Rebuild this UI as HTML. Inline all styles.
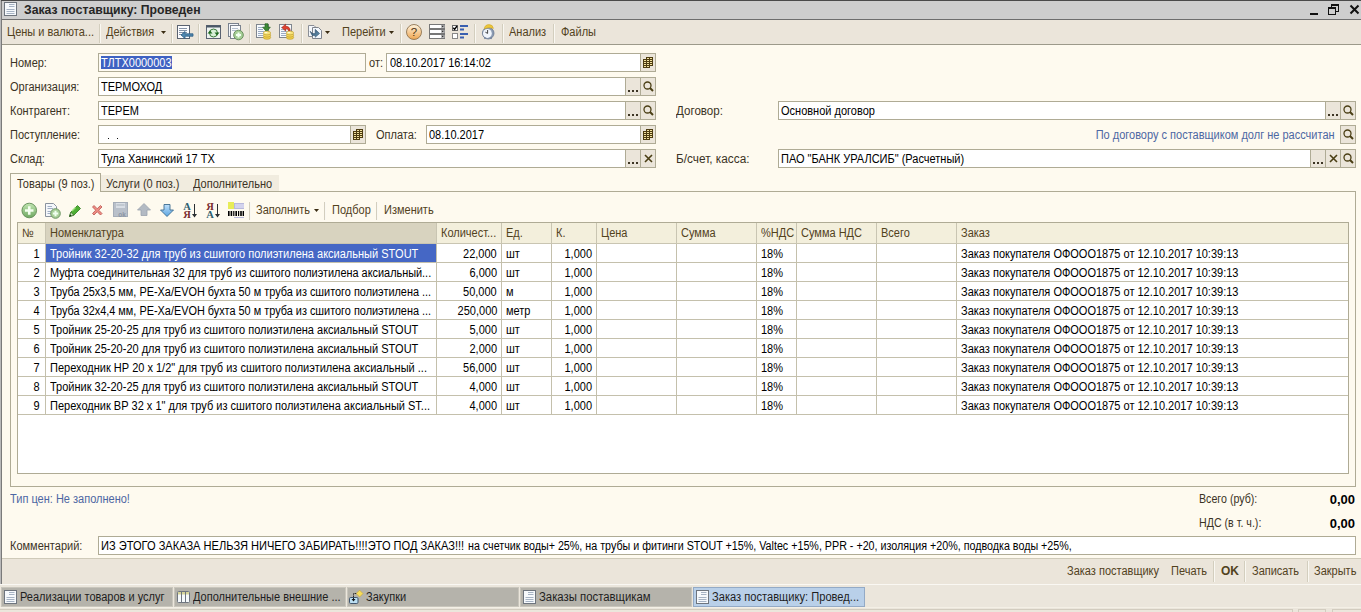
<!DOCTYPE html>
<html><head><meta charset="utf-8"><style>
html,body{margin:0;padding:0;width:1361px;height:612px;overflow:hidden;background:#fefaef;}
.a{position:absolute;}
.t{font-family:"Liberation Sans", sans-serif;line-height:13px;white-space:nowrap;}
svg.a{overflow:visible;}
</style></head><body>
<div class="a" style="left:0px;top:0px;width:1361px;height:612px;background:#fefaef;"></div>
<div class="a" style="left:0px;top:0px;width:1361px;height:1px;background:#4a4a4a;"></div>
<div class="a" style="left:1px;top:1px;width:1360px;height:18px;background:#cecece;"></div>
<div class="a" style="left:1px;top:19px;width:1360px;height:1px;background:#6e6e6e;"></div>
<div class="a" style="left:0px;top:0px;width:1px;height:584px;background:#b9b9b9;"></div>
<div class="a" style="left:1px;top:1px;width:1px;height:583px;background:#7a7a7a;"></div>
<svg class="a" style="left:4px;top:2px" width="13" height="14" viewBox="0 0 13 14"><rect x="0.5" y="0.5" width="12" height="13" fill="#f6f9fc" stroke="#6e757e"/><g stroke="#a6b3c4"><line x1="5" y1="2.5" x2="10.5" y2="2.5"/><line x1="5" y1="4.5" x2="10.5" y2="4.5"/><line x1="2.5" y1="7.5" x2="10.5" y2="7.5"/><line x1="2.5" y1="9.5" x2="10.5" y2="9.5"/><line x1="2.5" y1="11.5" x2="10.5" y2="11.5"/></g></svg>
<div class="a t " style="left:24px;top:4px;font-size:12.6px;transform-origin:0 0;color:#262626;font-weight:bold;transform:scaleX(0.97);">Заказ поставщику: Проведен</div>
<div class="a" style="left:1310px;top:13px;width:8px;height:2px;background:#111;"></div>
<svg class="a" style="left:1327px;top:3px" width="13" height="13" viewBox="0 0 13 13"><g fill="none" stroke="#111"><rect x="4.5" y="1.5" width="7" height="7"/><rect x="1.5" y="4.5" width="7" height="7" fill="#cecece"/></g><rect x="4" y="1" width="8" height="2" fill="#111"/><rect x="1" y="4" width="8" height="2" fill="#111"/></svg>
<svg class="a" style="left:1349px;top:4px" width="11" height="11" viewBox="0 0 11 11"><path d="M1.5 1.5L9.5 9.5M9.5 1.5L1.5 9.5" stroke="#111" stroke-width="2"/></svg>
<div class="a" style="left:2px;top:20px;width:1359px;height:24px;background:#ebe5da;"></div>
<div class="a" style="left:2px;top:44px;width:1359px;height:1px;background:#9c998a;"></div>
<div class="a t " style="left:7px;top:26px;font-size:12px;transform:scaleX(0.917);transform-origin:0 0;color:#52421d;font-weight:normal;">Цены и валюта...</div>
<div class="a" style="left:99px;top:24px;width:1px;height:19px;background:#d3cebe;"></div>
<div class="a" style="left:100px;top:24px;width:1px;height:19px;background:#faf8f2;"></div>
<div class="a t " style="left:106px;top:26px;font-size:12px;transform:scaleX(0.917);transform-origin:0 0;color:#52421d;font-weight:normal;">Действия</div>
<svg class="a" style="left:161px;top:31px" width="5" height="3" viewBox="0 0 5 3"><path d="M0 0H5L2.5 3Z" fill="#3a2c12"/></svg>
<div class="a" style="left:171px;top:24px;width:1px;height:19px;background:#d3cebe;"></div>
<div class="a" style="left:172px;top:24px;width:1px;height:19px;background:#faf8f2;"></div>
<div class="a" style="left:198px;top:24px;width:1px;height:19px;background:#d3cebe;"></div>
<div class="a" style="left:199px;top:24px;width:1px;height:19px;background:#faf8f2;"></div>
<div class="a" style="left:249px;top:24px;width:1px;height:19px;background:#d3cebe;"></div>
<div class="a" style="left:250px;top:24px;width:1px;height:19px;background:#faf8f2;"></div>
<div class="a" style="left:301px;top:24px;width:1px;height:19px;background:#d3cebe;"></div>
<div class="a" style="left:302px;top:24px;width:1px;height:19px;background:#faf8f2;"></div>
<div class="a t " style="left:342px;top:26px;font-size:12px;transform:scaleX(0.917);transform-origin:0 0;color:#52421d;font-weight:normal;">Перейти</div>
<svg class="a" style="left:389px;top:31px" width="5" height="3" viewBox="0 0 5 3"><path d="M0 0H5L2.5 3Z" fill="#3a2c12"/></svg>
<div class="a" style="left:400px;top:24px;width:1px;height:19px;background:#d3cebe;"></div>
<div class="a" style="left:401px;top:24px;width:1px;height:19px;background:#faf8f2;"></div>
<div class="a" style="left:474px;top:24px;width:1px;height:19px;background:#d3cebe;"></div>
<div class="a" style="left:475px;top:24px;width:1px;height:19px;background:#faf8f2;"></div>
<div class="a" style="left:502px;top:24px;width:1px;height:19px;background:#d3cebe;"></div>
<div class="a" style="left:503px;top:24px;width:1px;height:19px;background:#faf8f2;"></div>
<div class="a t " style="left:509px;top:26px;font-size:12px;transform:scaleX(0.917);transform-origin:0 0;color:#52421d;font-weight:normal;">Анализ</div>
<div class="a" style="left:553px;top:24px;width:1px;height:19px;background:#d3cebe;"></div>
<div class="a" style="left:554px;top:24px;width:1px;height:19px;background:#faf8f2;"></div>
<div class="a t " style="left:561px;top:26px;font-size:12px;transform:scaleX(0.917);transform-origin:0 0;color:#52421d;font-weight:normal;">Файлы</div>
<svg class="a" style="left:176px;top:24px" width="18" height="16" viewBox="0 0 18 16"><rect x="1.5" y="1.5" width="12" height="13" fill="#fbfcfe" stroke="#5a6270"/><g stroke="#8593a8"><line x1="3" y1="4.5" x2="11" y2="4.5"/><line x1="3" y1="6.5" x2="11" y2="6.5"/><line x1="3" y1="8.5" x2="11" y2="8.5"/><line x1="3" y1="10.5" x2="6" y2="10.5"/></g><path d="M5 11L9 7.5V9.8H17V12.2H9V14.5Z" fill="#4f86ae" stroke="#2f5f86" stroke-width="0.8"/></svg>
<svg class="a" style="left:206px;top:25px" width="15" height="14" viewBox="0 0 15 14"><rect x="0.5" y="0.5" width="14" height="13" fill="#eef3f0" stroke="#5a6270"/><rect x="0.5" y="0.5" width="14" height="2" fill="#4a5866"/><circle cx="7.5" cy="8" r="4" fill="#d8f0d8" stroke="#3a7a3a"/><path d="M1.5 8.5L4 5.5L6.5 8.5Z" fill="#1f6a1f"/><path d="M8.5 7.5L11 10.5L13.5 7.5Z" fill="#1f6a1f"/></svg>
<svg class="a" style="left:228px;top:23px" width="17" height="17" viewBox="0 0 17 17"><rect x="0.5" y="0.5" width="10" height="13" fill="#f4f6fa" stroke="#7a828e"/><rect x="2.5" y="2.5" width="10" height="13" fill="#fafbfd" stroke="#7a828e"/><g stroke="#b4c0d0"><line x1="4" y1="5.5" x2="10" y2="5.5"/><line x1="4" y1="7.5" x2="8" y2="7.5"/></g><circle cx="10.5" cy="12" r="4.8" fill="#a6cf96" stroke="#6a8f60"/><path d="M8 12H13M10.5 9.5V14.5" stroke="#f0fff0" stroke-width="2"/></svg>
<svg class="a" style="left:256px;top:23px" width="16" height="17" viewBox="0 0 16 17"><rect x="0.5" y="1.5" width="12" height="13" fill="#f7fafd" stroke="#80868e"/><g stroke="#9aaac2"><line x1="2" y1="4.5" x2="7" y2="4.5"/><line x1="2" y1="6.5" x2="7" y2="6.5"/><line x1="2" y1="8.5" x2="8" y2="8.5"/><line x1="2" y1="10.5" x2="7" y2="10.5"/><line x1="2" y1="12.5" x2="7" y2="12.5"/></g><path d="M9 0.8H12V4.2H14.3L10.5 8.8L6.7 4.2H9Z" fill="#3d8a36" stroke="#22601e" stroke-width="0.7"/><linearGradient id="gc" x1="0" y1="0" x2="0" y2="1"><stop offset="0" stop-color="#fff3a0"/><stop offset="1" stop-color="#d8b030"/></linearGradient><g stroke="#b8962a" stroke-width="0.6"><ellipse cx="11" cy="14.4" rx="3.7" ry="1.9" fill="#f0d04a"/><ellipse cx="11" cy="12.2" rx="3.7" ry="1.9" fill="#f3d658"/><ellipse cx="11" cy="10" rx="3.7" ry="1.9" fill="#f8e47a"/></g><ellipse cx="10" cy="9.6" rx="1.6" ry="0.7" fill="#fffbe0"/></svg>
<svg class="a" style="left:279px;top:23px" width="16" height="17" viewBox="0 0 16 17"><rect x="0.5" y="1.5" width="12" height="13" fill="#f7fafd" stroke="#80868e"/><g stroke="#9aaac2"><line x1="2" y1="4.5" x2="7" y2="4.5"/><line x1="2" y1="6.5" x2="7" y2="6.5"/><line x1="2" y1="8.5" x2="8" y2="8.5"/><line x1="2" y1="10.5" x2="7" y2="10.5"/><line x1="2" y1="12.5" x2="7" y2="12.5"/></g><path d="M2.8 4.6L6.6 1.2V3.3Q11.2 3.3 11.2 8H9.6Q9.4 5.6 6.6 5.8V8Z" fill="#e04030" stroke="#9a2010" stroke-width="0.6"/><linearGradient id="gc" x1="0" y1="0" x2="0" y2="1"><stop offset="0" stop-color="#fff3a0"/><stop offset="1" stop-color="#d8b030"/></linearGradient><g stroke="#b8962a" stroke-width="0.6"><ellipse cx="11" cy="14.4" rx="3.7" ry="1.9" fill="#f0d04a"/><ellipse cx="11" cy="12.2" rx="3.7" ry="1.9" fill="#f3d658"/><ellipse cx="11" cy="10" rx="3.7" ry="1.9" fill="#f8e47a"/></g><ellipse cx="10" cy="9.6" rx="1.6" ry="0.7" fill="#fffbe0"/></svg>
<svg class="a" style="left:308px;top:24px" width="16" height="16" viewBox="0 0 16 16"><path d="M0.5 1.5H6L7.5 3V12.5H0.5Z" fill="#f4f7fb" stroke="#8a8e96"/><path d="M4.5 3.5H10.5L13.5 6.5V14.5H4.5Z" fill="#f2f7fc" stroke="#7e838c"/><linearGradient id="gb" x1="0" y1="0" x2="1" y2="1"><stop offset="0" stop-color="#2c4c6a"/><stop offset="1" stop-color="#6a9ab8"/></linearGradient><path d="M2 7.2L4.6 9.6H7.2V5.3L11.6 9.5L7.2 13.3V11.5H4.2Z" fill="url(#gb)" stroke="#264460" stroke-width="0.5"/></svg>
<svg class="a" style="left:406px;top:24px" width="17" height="17" viewBox="0 0 17 17"><linearGradient id="gh" x1="0" y1="0" x2="0" y2="1"><stop offset="0" stop-color="#fff4de"/><stop offset="1" stop-color="#eea550"/></linearGradient><circle cx="8" cy="8" r="7.5" fill="url(#gh)" stroke="#8f7450" stroke-width="0.9"/><text x="8" y="12.3" text-anchor="middle" font-family="Liberation Sans" font-size="11.5" fill="#4a3414">?</text></svg>
<svg class="a" style="left:429px;top:24px" width="17" height="16" viewBox="0 0 17 16"><rect x="0.5" y="0.5" width="15" height="4" fill="#fff" stroke="#777"/><rect x="12" y="1" width="3.5" height="3" fill="#bbb"/><path d="M12.7 1.8H14.8L13.75 3.3Z" fill="#111"/><rect x="0.5" y="5.5" width="15" height="4" fill="#fff" stroke="#777"/><rect x="12" y="6" width="3.5" height="3" fill="#bbb"/><path d="M12.7 6.8H14.8L13.75 8.3Z" fill="#111"/><rect x="0.5" y="10.5" width="15" height="4" fill="#fff" stroke="#777"/><rect x="12" y="11" width="3.5" height="3" fill="#bbb"/><path d="M12.7 11.8H14.8L13.75 13.3Z" fill="#111"/></svg>
<svg class="a" style="left:452px;top:25px" width="17" height="15" viewBox="0 0 17 15"><rect x="0.5" y="0.5" width="5" height="5" fill="#fff" stroke="#666"/><path d="M1.3 2.8L2.6 4.3L5 1" stroke="#000" stroke-width="1.4" fill="none"/><rect x="0.5" y="8.5" width="5" height="5" fill="#fff" stroke="#888"/><g fill="#3a5fb0"><rect x="8" y="0" width="8" height="2"/><rect x="8" y="3.5" width="4" height="2"/><rect x="8" y="8" width="8" height="2"/><rect x="8" y="11.5" width="4" height="2"/></g></svg>
<svg class="a" style="left:481px;top:24px" width="15" height="16" viewBox="0 0 15 16"><circle cx="7.2" cy="9.2" r="5.8" fill="#8a9ab2" stroke="#6a7a92" stroke-width="0.8"/><ellipse cx="6.4" cy="9.4" rx="4.4" ry="4.5" fill="#f0f5fb"/><path d="M6.6 6V9.4L4.4 8.2" stroke="#333" fill="none" stroke-width="0.9"/><path d="M3.5 14.8L4.5 13.6M10.5 14.8L9.5 13.6" stroke="#6a7a98" stroke-width="1.2"/><path d="M3.2 4.8Q4 0.6 8 0.6Q12 0.6 12.4 4.4Q8 2.8 3.2 4.8Z" fill="#ecc63a" stroke="#c9a020" stroke-width="0.5"/></svg>
<svg class="a" style="left:325px;top:31px" width="5" height="3" viewBox="0 0 5 3"><path d="M0 0H5L2.5 3Z" fill="#3a2c12"/></svg>
<svg class="a" style="left:21px;top:202px" width="17" height="17" viewBox="0 0 17 17"><linearGradient id="ga" x1="0" y1="0" x2="0" y2="1"><stop offset="0" stop-color="#c2e6b2"/><stop offset="1" stop-color="#6fa862"/></linearGradient><circle cx="8.25" cy="8.5" r="7.3" fill="url(#ga)" stroke="#5f8a55" stroke-width="0.9"/><path d="M4 8.5H12.5M8.25 4.25V12.75" stroke="#f4fff0" stroke-width="2.6"/></svg>
<svg class="a" style="left:45px;top:203px" width="17" height="16" viewBox="0 0 17 16"><path d="M0.5 0.5H8.5L11.5 3.5V13.5H0.5Z" fill="#f5f7fb" stroke="#8a929e"/><g stroke="#a0aec4"><line x1="2.5" y1="3.5" x2="7" y2="3.5"/><line x1="2.5" y1="5.5" x2="8" y2="5.5"/><line x1="2.5" y1="8.5" x2="6" y2="8.5"/><line x1="2.5" y1="10.5" x2="6" y2="10.5"/></g><circle cx="10.5" cy="10.5" r="4.8" fill="#a8cf98" stroke="#6f9566"/><path d="M7.8 10.5H13.2M10.5 7.8V13.2" stroke="#f0fff0" stroke-width="2"/></svg>
<svg class="a" style="left:69px;top:204px" width="13" height="13" viewBox="0 0 13 13"><path d="M0.5 12.5L1.8 8.2L8.5 1.5L11.5 4.5L4.8 11.2Z" fill="#4faf34" stroke="#2d7a1e" stroke-width="0.8"/><path d="M3 7L6.5 3.5" stroke="#9be07a" stroke-width="1.2"/><path d="M0.5 12.5L1.8 8.2L4.8 11.2Z" fill="#cfe8c0" stroke="#2d5a1e" stroke-width="0.6"/><path d="M0.5 12.5L1.2 10.3L2.7 11.8Z" fill="#1a3a10"/></svg>
<svg class="a" style="left:91px;top:204px" width="13" height="13" viewBox="0 0 13 13"><path d="M1.5 3L3 1.5L6.2 4.7L9.5 1.5L11 3L7.7 6.2L11 9.5L9.5 11L6.2 7.7L3 11L1.5 9.5L4.7 6.2Z" fill="#ee8d84" stroke="#b9534e" stroke-width="0.8"/></svg>
<svg class="a" style="left:113px;top:202px" width="16" height="16" viewBox="0 0 16 16"><rect x="0.5" y="0.5" width="14" height="14" fill="#b9c0ca" stroke="#a5adb8"/><rect x="3" y="1" width="9" height="5" fill="#d9dee5"/><rect x="3.5" y="2.5" width="8" height="1" fill="#a9b1bc"/><text x="9" y="14.5" text-anchor="middle" font-family="Liberation Sans" font-weight="bold" font-size="6.5" fill="#8d96a3">ok</text></svg>
<svg class="a" style="left:137px;top:203px" width="14" height="13" viewBox="0 0 14 13"><path d="M0.5 7L7 0.5L13.5 7H10V12.5H4V7Z" fill="#b3bac3" stroke="#9aa2ad" stroke-width="0.8"/></svg>
<svg class="a" style="left:160px;top:204px" width="14" height="13" viewBox="0 0 14 13"><linearGradient id="gd" x1="0" y1="0" x2="0" y2="1"><stop offset="0" stop-color="#bfe0fb"/><stop offset="1" stop-color="#5aa4e0"/></linearGradient><path d="M4 0.5H10V6H13.5L7 12.5L0.5 6H4Z" fill="url(#gd)" stroke="#3c6c90" stroke-width="0.9"/></svg>
<svg class="a" style="left:183px;top:202px" width="16" height="17" viewBox="0 0 16 17"><text x="4" y="8" text-anchor="middle" font-family="Liberation Serif" font-weight="bold" font-size="10.5" fill="#2d5f70">A</text><text x="4" y="16.2" text-anchor="middle" font-family="Liberation Serif" font-weight="bold" font-size="10.5" fill="#7a2d2d">Я</text><path d="M11.5 2V15" stroke="#2a2f33" stroke-width="1"/><path d="M9 12L11.5 15.5L14 12Z" fill="#2a2f33"/></svg>
<svg class="a" style="left:206px;top:202px" width="16" height="17" viewBox="0 0 16 17"><text x="4" y="8" text-anchor="middle" font-family="Liberation Serif" font-weight="bold" font-size="10.5" fill="#7a2d2d">Я</text><text x="4" y="16.2" text-anchor="middle" font-family="Liberation Serif" font-weight="bold" font-size="10.5" fill="#2d5f70">A</text><path d="M11.5 2V15" stroke="#2a2f33" stroke-width="1"/><path d="M9 12L11.5 15.5L14 12Z" fill="#2a2f33"/></svg>
<svg class="a" style="left:228px;top:202px" width="17" height="17" viewBox="0 0 17 17"><rect x="0" y="0" width="6" height="7" fill="#e8ec58"/><rect x="6" y="1" width="10" height="6" fill="#b9b9dc"/><rect x="7" y="2.5" width="9" height="1" fill="#eef"/><rect x="7" y="4.5" width="9" height="1" fill="#eef"/><g fill="#000"><rect x="0" y="9" width="1.6" height="5"/><rect x="2.6" y="9" width="1.6" height="5"/><rect x="5.2" y="9" width="1.2" height="5"/><rect x="7.4" y="9" width="1.6" height="5"/><rect x="10" y="9" width="1.2" height="5"/><rect x="12.2" y="9" width="1.6" height="5"/><rect x="14.6" y="9" width="1.4" height="5"/></g><rect x="6" y="15" width="10" height="1" fill="#b9b9dc"/></svg>
<div class="a t " style="left:10px;top:57px;font-size:12px;transform:scaleX(0.917);transform-origin:0 0;color:#3b3325;font-weight:normal;">Номер:</div>
<div class="a" style="left:98px;top:53px;width:268px;height:19px;background:#fdfaf2;box-sizing:border-box;border:1px solid #afab95;"></div>
<div class="a" style="left:101px;top:56px;width:71px;height:13px;background:#3f62c2;"></div>
<div class="a t " style="left:101px;top:57px;font-size:12px;transform:scaleX(0.917);transform-origin:0 0;color:#fff;font-weight:normal;">ТЛТХ0000003</div>
<div class="a t " style="left:369px;top:57px;font-size:12px;transform:scaleX(0.917);transform-origin:0 0;color:#3b3325;font-weight:normal;">от:</div>
<div class="a" style="left:386px;top:53px;width:270px;height:19px;background:#fff;box-sizing:border-box;border:1px solid #afab95;"></div>
<div class="a" style="left:640px;top:53px;width:16px;height:19px;background:#ebe5da;box-sizing:border-box;border:1px solid #afab95;"></div>
<svg class="a" style="left:643px;top:57px" width="11" height="12" viewBox="0 0 11 12"><g fill="#4d3c12"><rect x="3" y="0" width="7" height="3"/><rect x="0" y="2" width="10" height="7"/><rect x="0" y="8" width="7" height="3"/></g><g fill="#f3e3a0"><rect x="4" y="1" width="2" height="1"/><rect x="7" y="1" width="2" height="1"/><rect x="1" y="3" width="2" height="1"/><rect x="4" y="3" width="2" height="1"/><rect x="7" y="3" width="2" height="1"/><rect x="1" y="5" width="2" height="1"/><rect x="4" y="5" width="2" height="1"/><rect x="7" y="5" width="2" height="1"/><rect x="1" y="7" width="2" height="1"/><rect x="4" y="7" width="2" height="1"/><rect x="7" y="7" width="2" height="1"/><rect x="1" y="9" width="2" height="1"/><rect x="4" y="9" width="2" height="1"/></g></svg>
<div class="a t " style="left:390px;top:57px;font-size:12px;transform:scaleX(0.917);transform-origin:0 0;color:#000;font-weight:normal;">08.10.2017 16:14:02</div>
<div class="a t " style="left:10px;top:81px;font-size:12px;transform:scaleX(0.917);transform-origin:0 0;color:#3b3325;font-weight:normal;">Организация:</div>
<div class="a" style="left:98px;top:77px;width:558px;height:19px;background:#fff;box-sizing:border-box;border:1px solid #afab95;"></div>
<div class="a" style="left:625px;top:77px;width:16px;height:19px;background:#ebe5da;box-sizing:border-box;border:1px solid #afab95;"></div>
<svg class="a" style="left:628px;top:90px" width="10" height="2" viewBox="0 0 10 2"><rect x="0" y="0" width="2" height="2" fill="#3d3525"/><rect x="4" y="0" width="2" height="2" fill="#3d3525"/><rect x="8" y="0" width="2" height="2" fill="#3d3525"/></svg>
<div class="a" style="left:640px;top:77px;width:16px;height:19px;background:#ebe5da;box-sizing:border-box;border:1px solid #afab95;"></div>
<svg class="a" style="left:643px;top:81px" width="11" height="11" viewBox="0 0 11 11"><circle cx="4.5" cy="4.5" r="3.5" fill="none" stroke="#4a3e14" stroke-width="1.3"/><path d="M7 7L10 10" stroke="#4a3e14" stroke-width="2"/></svg>
<div class="a t " style="left:101px;top:81px;font-size:12px;transform:scaleX(0.917);transform-origin:0 0;color:#000;font-weight:normal;">ТЕРМОХОД</div>
<div class="a t " style="left:10px;top:105px;font-size:12px;transform:scaleX(0.917);transform-origin:0 0;color:#3b3325;font-weight:normal;">Контрагент:</div>
<div class="a" style="left:98px;top:101px;width:558px;height:19px;background:#fff;box-sizing:border-box;border:1px solid #afab95;"></div>
<div class="a" style="left:625px;top:101px;width:16px;height:19px;background:#ebe5da;box-sizing:border-box;border:1px solid #afab95;"></div>
<svg class="a" style="left:628px;top:114px" width="10" height="2" viewBox="0 0 10 2"><rect x="0" y="0" width="2" height="2" fill="#3d3525"/><rect x="4" y="0" width="2" height="2" fill="#3d3525"/><rect x="8" y="0" width="2" height="2" fill="#3d3525"/></svg>
<div class="a" style="left:640px;top:101px;width:16px;height:19px;background:#ebe5da;box-sizing:border-box;border:1px solid #afab95;"></div>
<svg class="a" style="left:643px;top:105px" width="11" height="11" viewBox="0 0 11 11"><circle cx="4.5" cy="4.5" r="3.5" fill="none" stroke="#4a3e14" stroke-width="1.3"/><path d="M7 7L10 10" stroke="#4a3e14" stroke-width="2"/></svg>
<div class="a t " style="left:101px;top:105px;font-size:12px;transform:scaleX(0.917);transform-origin:0 0;color:#000;font-weight:normal;">ТЕРЕМ</div>
<div class="a t " style="left:10px;top:129px;font-size:12px;transform:scaleX(0.917);transform-origin:0 0;color:#3b3325;font-weight:normal;">Поступление:</div>
<div class="a" style="left:98px;top:125px;width:268px;height:19px;background:#fff;box-sizing:border-box;border:1px solid #afab95;"></div>
<div class="a" style="left:350px;top:125px;width:16px;height:19px;background:#ebe5da;box-sizing:border-box;border:1px solid #afab95;"></div>
<svg class="a" style="left:353px;top:129px" width="11" height="12" viewBox="0 0 11 12"><g fill="#4d3c12"><rect x="3" y="0" width="7" height="3"/><rect x="0" y="2" width="10" height="7"/><rect x="0" y="8" width="7" height="3"/></g><g fill="#f3e3a0"><rect x="4" y="1" width="2" height="1"/><rect x="7" y="1" width="2" height="1"/><rect x="1" y="3" width="2" height="1"/><rect x="4" y="3" width="2" height="1"/><rect x="7" y="3" width="2" height="1"/><rect x="1" y="5" width="2" height="1"/><rect x="4" y="5" width="2" height="1"/><rect x="7" y="5" width="2" height="1"/><rect x="1" y="7" width="2" height="1"/><rect x="4" y="7" width="2" height="1"/><rect x="7" y="7" width="2" height="1"/><rect x="1" y="9" width="2" height="1"/><rect x="4" y="9" width="2" height="1"/></g></svg>
<div class="a" style="left:108px;top:138px;width:1px;height:1px;background:#111;"></div>
<div class="a" style="left:117px;top:138px;width:1px;height:1px;background:#111;"></div>
<div class="a t " style="left:376px;top:129px;font-size:12px;transform:scaleX(0.917);transform-origin:0 0;color:#3b3325;font-weight:normal;">Оплата:</div>
<div class="a" style="left:426px;top:125px;width:230px;height:19px;background:#fff;box-sizing:border-box;border:1px solid #afab95;"></div>
<div class="a" style="left:640px;top:125px;width:16px;height:19px;background:#ebe5da;box-sizing:border-box;border:1px solid #afab95;"></div>
<svg class="a" style="left:643px;top:129px" width="11" height="12" viewBox="0 0 11 12"><g fill="#4d3c12"><rect x="3" y="0" width="7" height="3"/><rect x="0" y="2" width="10" height="7"/><rect x="0" y="8" width="7" height="3"/></g><g fill="#f3e3a0"><rect x="4" y="1" width="2" height="1"/><rect x="7" y="1" width="2" height="1"/><rect x="1" y="3" width="2" height="1"/><rect x="4" y="3" width="2" height="1"/><rect x="7" y="3" width="2" height="1"/><rect x="1" y="5" width="2" height="1"/><rect x="4" y="5" width="2" height="1"/><rect x="7" y="5" width="2" height="1"/><rect x="1" y="7" width="2" height="1"/><rect x="4" y="7" width="2" height="1"/><rect x="7" y="7" width="2" height="1"/><rect x="1" y="9" width="2" height="1"/><rect x="4" y="9" width="2" height="1"/></g></svg>
<div class="a t " style="left:429px;top:129px;font-size:12px;transform:scaleX(0.917);transform-origin:0 0;color:#000;font-weight:normal;">08.10.2017</div>
<div class="a t " style="left:10px;top:153px;font-size:12px;transform:scaleX(0.917);transform-origin:0 0;color:#3b3325;font-weight:normal;">Склад:</div>
<div class="a" style="left:98px;top:149px;width:558px;height:19px;background:#fff;box-sizing:border-box;border:1px solid #afab95;"></div>
<div class="a" style="left:625px;top:149px;width:16px;height:19px;background:#ebe5da;box-sizing:border-box;border:1px solid #afab95;"></div>
<svg class="a" style="left:628px;top:162px" width="10" height="2" viewBox="0 0 10 2"><rect x="0" y="0" width="2" height="2" fill="#3d3525"/><rect x="4" y="0" width="2" height="2" fill="#3d3525"/><rect x="8" y="0" width="2" height="2" fill="#3d3525"/></svg>
<div class="a" style="left:640px;top:149px;width:16px;height:19px;background:#ebe5da;box-sizing:border-box;border:1px solid #afab95;"></div>
<svg class="a" style="left:644px;top:154px" width="9" height="9" viewBox="0 0 9 9"><path d="M1 1L8 8M8 1L1 8" stroke="#4a3e14" stroke-width="1.6"/></svg>
<div class="a t " style="left:101px;top:153px;font-size:12px;transform:scaleX(0.917);transform-origin:0 0;color:#000;font-weight:normal;">Тула Ханинский 17 ТХ</div>
<div class="a t " style="left:676px;top:105px;font-size:12px;transform:scaleX(0.917);transform-origin:0 0;color:#3b3325;font-weight:normal;transform:scaleX(0.965);">Договор:</div>
<div class="a" style="left:778px;top:101px;width:578px;height:19px;background:#fff;box-sizing:border-box;border:1px solid #afab95;"></div>
<div class="a" style="left:1325px;top:101px;width:16px;height:19px;background:#ebe5da;box-sizing:border-box;border:1px solid #afab95;"></div>
<svg class="a" style="left:1328px;top:114px" width="10" height="2" viewBox="0 0 10 2"><rect x="0" y="0" width="2" height="2" fill="#3d3525"/><rect x="4" y="0" width="2" height="2" fill="#3d3525"/><rect x="8" y="0" width="2" height="2" fill="#3d3525"/></svg>
<div class="a" style="left:1340px;top:101px;width:16px;height:19px;background:#ebe5da;box-sizing:border-box;border:1px solid #afab95;"></div>
<svg class="a" style="left:1343px;top:105px" width="11" height="11" viewBox="0 0 11 11"><circle cx="4.5" cy="4.5" r="3.5" fill="none" stroke="#4a3e14" stroke-width="1.3"/><path d="M7 7L10 10" stroke="#4a3e14" stroke-width="2"/></svg>
<div class="a t " style="left:781px;top:105px;font-size:12px;transform:scaleX(0.917);transform-origin:0 0;color:#000;font-weight:normal;">Основной договор</div>
<div class="a t" style="right:26px;top:129px;font-size:12px;transform:scaleX(0.917);transform-origin:100% 0;color:#4d67a3;font-weight:normal;text-align:right;">По договору с поставщиком долг не рассчитан</div>
<div class="a" style="left:1340px;top:125px;width:16px;height:19px;background:#ebe5da;box-sizing:border-box;border:1px solid #afab95;"></div>
<svg class="a" style="left:1343px;top:129px" width="11" height="11" viewBox="0 0 11 11"><circle cx="4.5" cy="4.5" r="3.5" fill="none" stroke="#4a3e14" stroke-width="1.3"/><path d="M7 7L10 10" stroke="#4a3e14" stroke-width="2"/></svg>
<div class="a t " style="left:676px;top:153px;font-size:12px;transform:scaleX(0.917);transform-origin:0 0;color:#3b3325;font-weight:normal;transform:scaleX(0.985);">Б/счет, касса:</div>
<div class="a" style="left:778px;top:149px;width:578px;height:19px;background:#fff;box-sizing:border-box;border:1px solid #afab95;"></div>
<div class="a" style="left:1310px;top:149px;width:16px;height:19px;background:#ebe5da;box-sizing:border-box;border:1px solid #afab95;"></div>
<svg class="a" style="left:1313px;top:162px" width="10" height="2" viewBox="0 0 10 2"><rect x="0" y="0" width="2" height="2" fill="#3d3525"/><rect x="4" y="0" width="2" height="2" fill="#3d3525"/><rect x="8" y="0" width="2" height="2" fill="#3d3525"/></svg>
<div class="a" style="left:1325px;top:149px;width:16px;height:19px;background:#ebe5da;box-sizing:border-box;border:1px solid #afab95;"></div>
<svg class="a" style="left:1329px;top:154px" width="9" height="9" viewBox="0 0 9 9"><path d="M1 1L8 8M8 1L1 8" stroke="#4a3e14" stroke-width="1.6"/></svg>
<div class="a" style="left:1340px;top:149px;width:16px;height:19px;background:#ebe5da;box-sizing:border-box;border:1px solid #afab95;"></div>
<svg class="a" style="left:1343px;top:153px" width="11" height="11" viewBox="0 0 11 11"><circle cx="4.5" cy="4.5" r="3.5" fill="none" stroke="#4a3e14" stroke-width="1.3"/><path d="M7 7L10 10" stroke="#4a3e14" stroke-width="2"/></svg>
<div class="a t " style="left:781px;top:153px;font-size:12px;transform:scaleX(0.917);transform-origin:0 0;color:#000;font-weight:normal;">ПАО &quot;БАНК УРАЛСИБ&quot; (Расчетный)</div>
<div class="a" style="left:10px;top:191px;width:1346px;height:296px;box-sizing:border-box;border:1px solid #afab95;"></div>
<div class="a" style="left:101px;top:175px;width:178px;height:16px;background:#f1ecdf;"></div>
<div class="a" style="left:10px;top:173px;width:91px;height:19px;background:#fefaef;box-sizing:border-box;border:1px solid #afab95;border-bottom:none;"></div>
<div class="a t " style="left:17px;top:178px;font-size:12px;transform:scaleX(0.917);transform-origin:0 0;color:#3b3325;font-weight:normal;">Товары (9 поз.)</div>
<div class="a t " style="left:106px;top:178px;font-size:12px;transform:scaleX(0.917);transform-origin:0 0;color:#3b3325;font-weight:normal;">Услуги (0 поз.)</div>
<div class="a t " style="left:193px;top:178px;font-size:12px;transform:scaleX(0.917);transform-origin:0 0;color:#3b3325;font-weight:normal;">Дополнительно</div>
<div class="a" style="left:249px;top:202px;width:1px;height:18px;background:#d3cebe;"></div>
<div class="a" style="left:250px;top:202px;width:1px;height:18px;background:#faf8f2;"></div>
<div class="a t " style="left:256px;top:204px;font-size:12px;transform:scaleX(0.917);transform-origin:0 0;color:#52421d;font-weight:normal;">Заполнить</div>
<svg class="a" style="left:314px;top:209px" width="5" height="3" viewBox="0 0 5 3"><path d="M0 0H5L2.5 3Z" fill="#3a2c12"/></svg>
<div class="a" style="left:324px;top:202px;width:1px;height:18px;background:#d3cebe;"></div>
<div class="a" style="left:325px;top:202px;width:1px;height:18px;background:#faf8f2;"></div>
<div class="a t " style="left:332px;top:204px;font-size:12px;transform:scaleX(0.917);transform-origin:0 0;color:#52421d;font-weight:normal;">Подбор</div>
<div class="a" style="left:376px;top:202px;width:1px;height:18px;background:#d3cebe;"></div>
<div class="a" style="left:377px;top:202px;width:1px;height:18px;background:#faf8f2;"></div>
<div class="a t " style="left:384px;top:204px;font-size:12px;transform:scaleX(0.917);transform-origin:0 0;color:#52421d;font-weight:normal;">Изменить</div>
<div class="a" style="left:17px;top:222px;width:1332px;height:252px;background:#fff;box-sizing:border-box;border:1px solid #afab95;"></div>
<div class="a" style="left:18px;top:223px;width:1330px;height:20px;background:#f3efdc;"></div>
<div class="a" style="left:46px;top:223px;width:390px;height:20px;background:#d8d3bf;"></div>
<div class="a" style="left:18px;top:243px;width:1330px;height:1px;background:#c9c5b2;"></div>
<div class="a" style="left:45px;top:223px;width:1px;height:20px;background:#c9c5b2;"></div>
<div class="a" style="left:45px;top:244px;width:1px;height:171px;background:#c4c0ac;"></div>
<div class="a" style="left:436px;top:223px;width:1px;height:20px;background:#c9c5b2;"></div>
<div class="a" style="left:436px;top:244px;width:1px;height:171px;background:#c4c0ac;"></div>
<div class="a" style="left:501px;top:223px;width:1px;height:20px;background:#c9c5b2;"></div>
<div class="a" style="left:501px;top:244px;width:1px;height:171px;background:#c4c0ac;"></div>
<div class="a" style="left:551px;top:223px;width:1px;height:20px;background:#c9c5b2;"></div>
<div class="a" style="left:551px;top:244px;width:1px;height:171px;background:#c4c0ac;"></div>
<div class="a" style="left:596px;top:223px;width:1px;height:20px;background:#c9c5b2;"></div>
<div class="a" style="left:596px;top:244px;width:1px;height:171px;background:#c4c0ac;"></div>
<div class="a" style="left:676px;top:223px;width:1px;height:20px;background:#c9c5b2;"></div>
<div class="a" style="left:676px;top:244px;width:1px;height:171px;background:#c4c0ac;"></div>
<div class="a" style="left:756px;top:223px;width:1px;height:20px;background:#c9c5b2;"></div>
<div class="a" style="left:756px;top:244px;width:1px;height:171px;background:#c4c0ac;"></div>
<div class="a" style="left:796px;top:223px;width:1px;height:20px;background:#c9c5b2;"></div>
<div class="a" style="left:796px;top:244px;width:1px;height:171px;background:#c4c0ac;"></div>
<div class="a" style="left:876px;top:223px;width:1px;height:20px;background:#c9c5b2;"></div>
<div class="a" style="left:876px;top:244px;width:1px;height:171px;background:#c4c0ac;"></div>
<div class="a" style="left:956px;top:223px;width:1px;height:20px;background:#c9c5b2;"></div>
<div class="a" style="left:956px;top:244px;width:1px;height:171px;background:#c4c0ac;"></div>
<div class="a t " style="left:22px;top:227px;font-size:12px;transform:scaleX(0.917);transform-origin:0 0;color:#52421d;font-weight:normal;">№</div>
<div class="a t " style="left:50px;top:227px;font-size:12px;transform:scaleX(0.917);transform-origin:0 0;color:#52421d;font-weight:normal;">Номенклатура</div>
<div class="a t " style="left:441px;top:227px;font-size:12px;transform:scaleX(0.917);transform-origin:0 0;color:#52421d;font-weight:normal;">Количест...</div>
<div class="a t " style="left:506px;top:227px;font-size:12px;transform:scaleX(0.917);transform-origin:0 0;color:#52421d;font-weight:normal;">Ед.</div>
<div class="a t " style="left:556px;top:227px;font-size:12px;transform:scaleX(0.917);transform-origin:0 0;color:#52421d;font-weight:normal;">К.</div>
<div class="a t " style="left:601px;top:227px;font-size:12px;transform:scaleX(0.917);transform-origin:0 0;color:#52421d;font-weight:normal;">Цена</div>
<div class="a t " style="left:681px;top:227px;font-size:12px;transform:scaleX(0.917);transform-origin:0 0;color:#52421d;font-weight:normal;">Сумма</div>
<div class="a t " style="left:761px;top:227px;font-size:12px;transform:scaleX(0.917);transform-origin:0 0;color:#52421d;font-weight:normal;">%НДС</div>
<div class="a t " style="left:801px;top:227px;font-size:12px;transform:scaleX(0.917);transform-origin:0 0;color:#52421d;font-weight:normal;">Сумма НДС</div>
<div class="a t " style="left:881px;top:227px;font-size:12px;transform:scaleX(0.917);transform-origin:0 0;color:#52421d;font-weight:normal;">Всего</div>
<div class="a t " style="left:961px;top:227px;font-size:12px;transform:scaleX(0.917);transform-origin:0 0;color:#52421d;font-weight:normal;">Заказ</div>
<div class="a" style="left:18px;top:262px;width:1330px;height:1px;background:#c4c0ac;"></div>
<div class="a" style="left:46px;top:244px;width:390px;height:18px;background:#4567c5;"></div>
<div class="a t" style="right:1321px;top:248px;font-size:12px;transform:scaleX(0.917);transform-origin:100% 0;color:#000;font-weight:normal;text-align:right;">1</div>
<div class="a t " style="left:50px;top:248px;font-size:12px;transform:scaleX(0.917);transform-origin:0 0;color:#fff;font-weight:normal;">Тройник 32-20-32 для труб из сшитого полиэтилена аксиальный STOUT</div>
<div class="a t" style="right:864px;top:248px;font-size:12px;transform:scaleX(0.917);transform-origin:100% 0;color:#000;font-weight:normal;text-align:right;">22,000</div>
<div class="a t " style="left:506px;top:248px;font-size:12px;transform:scaleX(0.917);transform-origin:0 0;color:#000;font-weight:normal;">шт</div>
<div class="a t" style="right:769px;top:248px;font-size:12px;transform:scaleX(0.917);transform-origin:100% 0;color:#000;font-weight:normal;text-align:right;">1,000</div>
<div class="a t " style="left:761px;top:248px;font-size:12px;transform:scaleX(0.917);transform-origin:0 0;color:#000;font-weight:normal;">18%</div>
<div class="a t " style="left:961px;top:248px;font-size:12px;transform:scaleX(0.917);transform-origin:0 0;color:#000;font-weight:normal;">Заказ покупателя ОФООО1875 от 12.10.2017 10:39:13</div>
<div class="a" style="left:18px;top:281px;width:1330px;height:1px;background:#c4c0ac;"></div>
<div class="a t" style="right:1321px;top:267px;font-size:12px;transform:scaleX(0.917);transform-origin:100% 0;color:#000;font-weight:normal;text-align:right;">2</div>
<div class="a t " style="left:50px;top:267px;font-size:12px;transform:scaleX(0.917);transform-origin:0 0;color:#000;font-weight:normal;transform:scaleX(0.908);">Муфта соединительная 32 для труб из сшитого полиэтилена аксиальный...</div>
<div class="a t" style="right:864px;top:267px;font-size:12px;transform:scaleX(0.917);transform-origin:100% 0;color:#000;font-weight:normal;text-align:right;">6,000</div>
<div class="a t " style="left:506px;top:267px;font-size:12px;transform:scaleX(0.917);transform-origin:0 0;color:#000;font-weight:normal;">шт</div>
<div class="a t" style="right:769px;top:267px;font-size:12px;transform:scaleX(0.917);transform-origin:100% 0;color:#000;font-weight:normal;text-align:right;">1,000</div>
<div class="a t " style="left:761px;top:267px;font-size:12px;transform:scaleX(0.917);transform-origin:0 0;color:#000;font-weight:normal;">18%</div>
<div class="a t " style="left:961px;top:267px;font-size:12px;transform:scaleX(0.917);transform-origin:0 0;color:#000;font-weight:normal;">Заказ покупателя ОФООО1875 от 12.10.2017 10:39:13</div>
<div class="a" style="left:18px;top:300px;width:1330px;height:1px;background:#c4c0ac;"></div>
<div class="a t" style="right:1321px;top:286px;font-size:12px;transform:scaleX(0.917);transform-origin:100% 0;color:#000;font-weight:normal;text-align:right;">3</div>
<div class="a t " style="left:50px;top:286px;font-size:12px;transform:scaleX(0.917);transform-origin:0 0;color:#000;font-weight:normal;transform:scaleX(0.908);">Труба 25х3,5 мм, PE-Xa/EVOH бухта 50 м труба из сшитого полиэтилена ...</div>
<div class="a t" style="right:864px;top:286px;font-size:12px;transform:scaleX(0.917);transform-origin:100% 0;color:#000;font-weight:normal;text-align:right;">50,000</div>
<div class="a t " style="left:506px;top:286px;font-size:12px;transform:scaleX(0.917);transform-origin:0 0;color:#000;font-weight:normal;">м</div>
<div class="a t" style="right:769px;top:286px;font-size:12px;transform:scaleX(0.917);transform-origin:100% 0;color:#000;font-weight:normal;text-align:right;">1,000</div>
<div class="a t " style="left:761px;top:286px;font-size:12px;transform:scaleX(0.917);transform-origin:0 0;color:#000;font-weight:normal;">18%</div>
<div class="a t " style="left:961px;top:286px;font-size:12px;transform:scaleX(0.917);transform-origin:0 0;color:#000;font-weight:normal;">Заказ покупателя ОФООО1875 от 12.10.2017 10:39:13</div>
<div class="a" style="left:18px;top:319px;width:1330px;height:1px;background:#c4c0ac;"></div>
<div class="a t" style="right:1321px;top:305px;font-size:12px;transform:scaleX(0.917);transform-origin:100% 0;color:#000;font-weight:normal;text-align:right;">4</div>
<div class="a t " style="left:50px;top:305px;font-size:12px;transform:scaleX(0.917);transform-origin:0 0;color:#000;font-weight:normal;transform:scaleX(0.908);">Труба 32х4,4 мм, PE-Xa/EVOH бухта 50 м труба из сшитого полиэтилена ...</div>
<div class="a t" style="right:864px;top:305px;font-size:12px;transform:scaleX(0.917);transform-origin:100% 0;color:#000;font-weight:normal;text-align:right;">250,000</div>
<div class="a t " style="left:506px;top:305px;font-size:12px;transform:scaleX(0.917);transform-origin:0 0;color:#000;font-weight:normal;">метр</div>
<div class="a t" style="right:769px;top:305px;font-size:12px;transform:scaleX(0.917);transform-origin:100% 0;color:#000;font-weight:normal;text-align:right;">1,000</div>
<div class="a t " style="left:761px;top:305px;font-size:12px;transform:scaleX(0.917);transform-origin:0 0;color:#000;font-weight:normal;">18%</div>
<div class="a t " style="left:961px;top:305px;font-size:12px;transform:scaleX(0.917);transform-origin:0 0;color:#000;font-weight:normal;">Заказ покупателя ОФООО1875 от 12.10.2017 10:39:13</div>
<div class="a" style="left:18px;top:338px;width:1330px;height:1px;background:#c4c0ac;"></div>
<div class="a t" style="right:1321px;top:324px;font-size:12px;transform:scaleX(0.917);transform-origin:100% 0;color:#000;font-weight:normal;text-align:right;">5</div>
<div class="a t " style="left:50px;top:324px;font-size:12px;transform:scaleX(0.917);transform-origin:0 0;color:#000;font-weight:normal;">Тройник 25-20-25 для труб из сшитого полиэтилена аксиальный STOUT</div>
<div class="a t" style="right:864px;top:324px;font-size:12px;transform:scaleX(0.917);transform-origin:100% 0;color:#000;font-weight:normal;text-align:right;">5,000</div>
<div class="a t " style="left:506px;top:324px;font-size:12px;transform:scaleX(0.917);transform-origin:0 0;color:#000;font-weight:normal;">шт</div>
<div class="a t" style="right:769px;top:324px;font-size:12px;transform:scaleX(0.917);transform-origin:100% 0;color:#000;font-weight:normal;text-align:right;">1,000</div>
<div class="a t " style="left:761px;top:324px;font-size:12px;transform:scaleX(0.917);transform-origin:0 0;color:#000;font-weight:normal;">18%</div>
<div class="a t " style="left:961px;top:324px;font-size:12px;transform:scaleX(0.917);transform-origin:0 0;color:#000;font-weight:normal;">Заказ покупателя ОФООО1875 от 12.10.2017 10:39:13</div>
<div class="a" style="left:18px;top:357px;width:1330px;height:1px;background:#c4c0ac;"></div>
<div class="a t" style="right:1321px;top:343px;font-size:12px;transform:scaleX(0.917);transform-origin:100% 0;color:#000;font-weight:normal;text-align:right;">6</div>
<div class="a t " style="left:50px;top:343px;font-size:12px;transform:scaleX(0.917);transform-origin:0 0;color:#000;font-weight:normal;">Тройник 25-20-20 для труб из сшитого полиэтилена аксиальный STOUT</div>
<div class="a t" style="right:864px;top:343px;font-size:12px;transform:scaleX(0.917);transform-origin:100% 0;color:#000;font-weight:normal;text-align:right;">2,000</div>
<div class="a t " style="left:506px;top:343px;font-size:12px;transform:scaleX(0.917);transform-origin:0 0;color:#000;font-weight:normal;">шт</div>
<div class="a t" style="right:769px;top:343px;font-size:12px;transform:scaleX(0.917);transform-origin:100% 0;color:#000;font-weight:normal;text-align:right;">1,000</div>
<div class="a t " style="left:761px;top:343px;font-size:12px;transform:scaleX(0.917);transform-origin:0 0;color:#000;font-weight:normal;">18%</div>
<div class="a t " style="left:961px;top:343px;font-size:12px;transform:scaleX(0.917);transform-origin:0 0;color:#000;font-weight:normal;">Заказ покупателя ОФООО1875 от 12.10.2017 10:39:13</div>
<div class="a" style="left:18px;top:376px;width:1330px;height:1px;background:#c4c0ac;"></div>
<div class="a t" style="right:1321px;top:362px;font-size:12px;transform:scaleX(0.917);transform-origin:100% 0;color:#000;font-weight:normal;text-align:right;">7</div>
<div class="a t " style="left:50px;top:362px;font-size:12px;transform:scaleX(0.917);transform-origin:0 0;color:#000;font-weight:normal;">Переходник НР 20 х 1/2&quot; для труб из сшитого полиэтилена аксиальный ...</div>
<div class="a t" style="right:864px;top:362px;font-size:12px;transform:scaleX(0.917);transform-origin:100% 0;color:#000;font-weight:normal;text-align:right;">56,000</div>
<div class="a t " style="left:506px;top:362px;font-size:12px;transform:scaleX(0.917);transform-origin:0 0;color:#000;font-weight:normal;">шт</div>
<div class="a t" style="right:769px;top:362px;font-size:12px;transform:scaleX(0.917);transform-origin:100% 0;color:#000;font-weight:normal;text-align:right;">1,000</div>
<div class="a t " style="left:761px;top:362px;font-size:12px;transform:scaleX(0.917);transform-origin:0 0;color:#000;font-weight:normal;">18%</div>
<div class="a t " style="left:961px;top:362px;font-size:12px;transform:scaleX(0.917);transform-origin:0 0;color:#000;font-weight:normal;">Заказ покупателя ОФООО1875 от 12.10.2017 10:39:13</div>
<div class="a" style="left:18px;top:395px;width:1330px;height:1px;background:#c4c0ac;"></div>
<div class="a t" style="right:1321px;top:381px;font-size:12px;transform:scaleX(0.917);transform-origin:100% 0;color:#000;font-weight:normal;text-align:right;">8</div>
<div class="a t " style="left:50px;top:381px;font-size:12px;transform:scaleX(0.917);transform-origin:0 0;color:#000;font-weight:normal;">Тройник 32-20-25 для труб из сшитого полиэтилена аксиальный STOUT</div>
<div class="a t" style="right:864px;top:381px;font-size:12px;transform:scaleX(0.917);transform-origin:100% 0;color:#000;font-weight:normal;text-align:right;">4,000</div>
<div class="a t " style="left:506px;top:381px;font-size:12px;transform:scaleX(0.917);transform-origin:0 0;color:#000;font-weight:normal;">шт</div>
<div class="a t" style="right:769px;top:381px;font-size:12px;transform:scaleX(0.917);transform-origin:100% 0;color:#000;font-weight:normal;text-align:right;">1,000</div>
<div class="a t " style="left:761px;top:381px;font-size:12px;transform:scaleX(0.917);transform-origin:0 0;color:#000;font-weight:normal;">18%</div>
<div class="a t " style="left:961px;top:381px;font-size:12px;transform:scaleX(0.917);transform-origin:0 0;color:#000;font-weight:normal;">Заказ покупателя ОФООО1875 от 12.10.2017 10:39:13</div>
<div class="a" style="left:18px;top:414px;width:1330px;height:1px;background:#c4c0ac;"></div>
<div class="a t" style="right:1321px;top:400px;font-size:12px;transform:scaleX(0.917);transform-origin:100% 0;color:#000;font-weight:normal;text-align:right;">9</div>
<div class="a t " style="left:50px;top:400px;font-size:12px;transform:scaleX(0.917);transform-origin:0 0;color:#000;font-weight:normal;">Переходник ВР 32 х 1&quot; для труб из сшитого полиэтилена аксиальный ST...</div>
<div class="a t" style="right:864px;top:400px;font-size:12px;transform:scaleX(0.917);transform-origin:100% 0;color:#000;font-weight:normal;text-align:right;">4,000</div>
<div class="a t " style="left:506px;top:400px;font-size:12px;transform:scaleX(0.917);transform-origin:0 0;color:#000;font-weight:normal;">шт</div>
<div class="a t" style="right:769px;top:400px;font-size:12px;transform:scaleX(0.917);transform-origin:100% 0;color:#000;font-weight:normal;text-align:right;">1,000</div>
<div class="a t " style="left:761px;top:400px;font-size:12px;transform:scaleX(0.917);transform-origin:0 0;color:#000;font-weight:normal;">18%</div>
<div class="a t " style="left:961px;top:400px;font-size:12px;transform:scaleX(0.917);transform-origin:0 0;color:#000;font-weight:normal;">Заказ покупателя ОФООО1875 от 12.10.2017 10:39:13</div>
<div class="a t " style="left:10px;top:493px;font-size:12px;transform:scaleX(0.917);transform-origin:0 0;color:#4d67a3;font-weight:normal;">Тип цен: Не заполнено!</div>
<div class="a t " style="left:1199px;top:493px;font-size:12px;transform:scaleX(0.917);transform-origin:0 0;color:#3b3325;font-weight:normal;transform:scaleX(0.888);">Всего (руб):</div>
<div class="a t" style="right:6px;top:493px;font-size:13px;transform-origin:100% 0;color:#000;font-weight:bold;text-align:right;">0,00</div>
<div class="a t " style="left:1199px;top:517px;font-size:12px;transform:scaleX(0.917);transform-origin:0 0;color:#3b3325;font-weight:normal;transform:scaleX(0.888);">НДС (в т. ч.):</div>
<div class="a t" style="right:6px;top:517px;font-size:13px;transform-origin:100% 0;color:#000;font-weight:bold;text-align:right;">0,00</div>
<div class="a t " style="left:10px;top:540px;font-size:12px;transform:scaleX(0.917);transform-origin:0 0;color:#3b3325;font-weight:normal;">Комментарий:</div>
<div class="a" style="left:98px;top:536px;width:1258px;height:19px;background:#fff;box-sizing:border-box;border:1px solid #afab95;"></div>
<div class="a t " style="left:101px;top:540px;font-size:12px;transform:scaleX(0.917);transform-origin:0 0;color:#000;font-weight:normal;transform:scaleX(0.923);">ИЗ ЭТОГО ЗАКАЗА НЕЛЬЗЯ НИЧЕГО ЗАБИРАТЬ!!!!ЭТО ПОД ЗАКАЗ!!!</div>
<div class="a t " style="left:467.5px;top:540px;font-size:12px;transform:scaleX(0.917);transform-origin:0 0;color:#000;font-weight:normal;transform:scaleX(0.893);">на счетчик воды+ 25%, на трубы и фитинги STOUT +15%, Valtec +15%, PPR - +20, изоляция +20%, подводка воды +25%,</div>
<div class="a" style="left:2px;top:558px;width:1359px;height:1px;background:#cfcab9;"></div>
<div class="a" style="left:2px;top:559px;width:1359px;height:25px;background:#ebe5da;"></div>
<div class="a t " style="left:1067px;top:565px;font-size:12px;transform:scaleX(0.917);transform-origin:0 0;color:#52421d;font-weight:normal;">Заказ поставщику</div>
<div class="a t " style="left:1171px;top:565px;font-size:12px;transform:scaleX(0.917);transform-origin:0 0;color:#52421d;font-weight:normal;">Печать</div>
<div class="a" style="left:1213px;top:561px;width:1px;height:21px;background:#d3cebe;"></div>
<div class="a" style="left:1214px;top:561px;width:1px;height:21px;background:#faf8f2;"></div>
<div class="a t " style="left:1221px;top:565px;font-size:12px;transform-origin:0 0;color:#52421d;font-weight:bold;">OK</div>
<div class="a" style="left:1244px;top:561px;width:1px;height:21px;background:#d3cebe;"></div>
<div class="a" style="left:1245px;top:561px;width:1px;height:21px;background:#faf8f2;"></div>
<div class="a t " style="left:1252px;top:565px;font-size:12px;transform:scaleX(0.917);transform-origin:0 0;color:#52421d;font-weight:normal;">Записать</div>
<div class="a" style="left:1307px;top:561px;width:1px;height:21px;background:#d3cebe;"></div>
<div class="a" style="left:1308px;top:561px;width:1px;height:21px;background:#faf8f2;"></div>
<div class="a t " style="left:1314px;top:565px;font-size:12px;transform:scaleX(0.917);transform-origin:0 0;color:#52421d;font-weight:normal;">Закрыть</div>
<div class="a" style="left:0px;top:584px;width:1361px;height:1px;background:#faf8f3;"></div>
<div class="a" style="left:0px;top:585px;width:1361px;height:27px;background:#ebe6dc;"></div>
<div class="a" style="left:1px;top:587px;width:172px;height:20px;background:#b5b3ab;box-sizing:border-box;border:1px solid #c9c6bc;"></div>
<svg class="a" style="left:4px;top:590px" width="13" height="14" viewBox="0 0 13 14"><rect x="0.5" y="0.5" width="12" height="13" fill="#f6f9fc" stroke="#6e757e"/><g stroke="#a6b3c4"><line x1="5" y1="2.5" x2="10.5" y2="2.5"/><line x1="5" y1="4.5" x2="10.5" y2="4.5"/><line x1="2.5" y1="7.5" x2="10.5" y2="7.5"/><line x1="2.5" y1="9.5" x2="10.5" y2="9.5"/><line x1="2.5" y1="11.5" x2="10.5" y2="11.5"/></g></svg>
<div class="a t " style="left:20px;top:591px;font-size:12px;transform:scaleX(0.917);transform-origin:0 0;color:#1e1e1e;font-weight:normal;">Реализации товаров и услуг</div>
<div class="a" style="left:174px;top:587px;width:172px;height:20px;background:#b5b3ab;box-sizing:border-box;border:1px solid #c9c6bc;"></div>
<svg class="a" style="left:177px;top:591px" width="13" height="12" viewBox="0 0 13 12"><rect x="0.5" y="0.5" width="12" height="11" rx="1" fill="#f6fafc" stroke="#6f7680"/><rect x="1" y="1" width="11" height="2.5" fill="#d6d49a"/><g stroke="#6f7680"><line x1="4.5" y1="1" x2="4.5" y2="11"/><line x1="8.5" y1="1" x2="8.5" y2="11"/></g></svg>
<div class="a t " style="left:193px;top:591px;font-size:12px;transform:scaleX(0.917);transform-origin:0 0;color:#1e1e1e;font-weight:normal;">Дополнительные внешние ...</div>
<div class="a" style="left:347px;top:587px;width:172px;height:20px;background:#b5b3ab;box-sizing:border-box;border:1px solid #c9c6bc;"></div>
<svg class="a" style="left:349px;top:589px" width="16" height="16" viewBox="0 0 16 16"><rect x="0.5" y="8.5" width="8.5" height="6" rx="1.2" fill="#bcdff3" stroke="#40566e"/><path d="M10.6 1.2L14 4.6L10.6 8L7.2 4.6Z" fill="#f6dc5a" stroke="#c8a632" stroke-width="0.6"/><path d="M7.2 4.5H4.5V10.5" stroke="#111" fill="none" stroke-dasharray="1 0.8"/><path d="M2.5 10L4.5 12.6L6.5 10Z" fill="#111"/></svg>
<div class="a t " style="left:366px;top:591px;font-size:12px;transform:scaleX(0.917);transform-origin:0 0;color:#1e1e1e;font-weight:normal;">Закупки</div>
<div class="a" style="left:520px;top:587px;width:172px;height:20px;background:#b5b3ab;box-sizing:border-box;border:1px solid #c9c6bc;"></div>
<svg class="a" style="left:523px;top:590px" width="13" height="14" viewBox="0 0 13 14"><rect x="0.5" y="0.5" width="12" height="13" fill="#f6f9fc" stroke="#6e757e"/><g stroke="#a6b3c4"><line x1="5" y1="2.5" x2="10.5" y2="2.5"/><line x1="5" y1="4.5" x2="10.5" y2="4.5"/><line x1="2.5" y1="7.5" x2="10.5" y2="7.5"/><line x1="2.5" y1="9.5" x2="10.5" y2="9.5"/><line x1="2.5" y1="11.5" x2="10.5" y2="11.5"/></g></svg>
<div class="a t " style="left:539px;top:591px;font-size:12px;transform:scaleX(0.917);transform-origin:0 0;color:#1e1e1e;font-weight:normal;transform:scaleX(0.945);">Заказы поставщикам</div>
<div class="a" style="left:693px;top:587px;width:172px;height:20px;background:#b9d0e9;box-sizing:border-box;border:1px solid #93aac6;"></div>
<svg class="a" style="left:696px;top:590px" width="13" height="14" viewBox="0 0 13 14"><rect x="0.5" y="0.5" width="12" height="13" fill="#f6f9fc" stroke="#6e757e"/><g stroke="#a6b3c4"><line x1="5" y1="2.5" x2="10.5" y2="2.5"/><line x1="5" y1="4.5" x2="10.5" y2="4.5"/><line x1="2.5" y1="7.5" x2="10.5" y2="7.5"/><line x1="2.5" y1="9.5" x2="10.5" y2="9.5"/><line x1="2.5" y1="11.5" x2="10.5" y2="11.5"/></g></svg>
<div class="a t " style="left:712px;top:591px;font-size:12px;transform:scaleX(0.917);transform-origin:0 0;color:#1e1e1e;font-weight:normal;transform:scaleX(0.927);">Заказ поставщику: Провед...</div>
<div class="a" style="left:0px;top:607px;width:1361px;height:1px;background:#f4f0e6;"></div>
<div class="a" style="left:0px;top:609px;width:1292px;height:1px;background:#d2ccbf;"></div>
<div class="a" style="left:1292px;top:609px;width:1px;height:3px;background:#d2ccbf;"></div>
<div class="a" style="left:1298px;top:609px;width:1px;height:3px;background:#d2ccbf;"></div>
<div class="a" style="left:1298px;top:609px;width:28px;height:1px;background:#d2ccbf;"></div>
<div class="a" style="left:1325px;top:609px;width:1px;height:3px;background:#d2ccbf;"></div>
<div class="a" style="left:1332px;top:609px;width:1px;height:3px;background:#d2ccbf;"></div>
<div class="a" style="left:1332px;top:609px;width:29px;height:1px;background:#d2ccbf;"></div>
</body></html>
